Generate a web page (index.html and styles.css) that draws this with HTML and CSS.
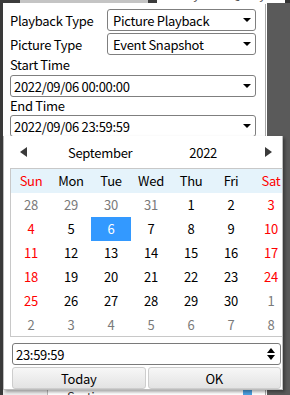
FILE: index.html
```html
<!DOCTYPE html>
<html lang="en">
<head>
    <meta charset="UTF-8">
    <title>Playback</title>
    <link rel="stylesheet" href="styles.css">
</head>
<body>
    <div class="screen">
        <div class="topbar">
            <div class="tb-left"></div>
            <div class="tb-tab"></div>
            <div class="tb-gap"></div>
            <div class="tb-active"><span class="tb-text">Playback Query</span></div>
            <div class="tb-right"></div>
        </div>

        <div class="workspace">
            <div class="edge"></div>
            <div class="panel">
                <div class="form">
                    <div class="row">
                        <span class="row-label">Playback Type</span>
                        <div class="select">
                            <span>Picture Playback</span>
                            <span class="caret"></span>
                        </div>
                    </div>
                    <div class="row">
                        <span class="row-label">Picture Type</span>
                        <div class="select">
                            <span>Event Snapshot</span>
                            <span class="caret"></span>
                        </div>
                    </div>
                    <div class="field-label">Start Time</div>
                    <div class="input">
                        <span>2022/09/06 00:00:00</span>
                        <span class="caret"></span>
                    </div>
                    <div class="field-label second">End Time</div>
                    <div class="input">
                        <span>2022/09/06 23:59:59</span>
                        <span class="caret"></span>
                    </div>

                    <div class="list-head">
                        <div class="cell-first"></div>
                        <div class="cell-name">Sorting</div>
                        <div class="cell-mark"></div>
                    </div>
                </div>
            </div>
            <div class="side"></div>
        </div>

        <div class="calendar">
            <div class="cal-head">
                <span class="nav prev"></span>
                <span class="month">September</span>
                <span class="year">2022</span>
                <span class="nav next"></span>
            </div>

            <div class="cal-grid">
                <div class="days">
                    <span class="dow red">Sun</span>
                    <span class="dow">Mon</span>
                    <span class="dow">Tue</span>
                    <span class="dow">Wed</span>
                    <span class="dow">Thu</span>
                    <span class="dow">Fri</span>
                    <span class="dow red">Sat</span>

                    <span class="day other">28</span>
                    <span class="day other">29</span>
                    <span class="day other">30</span>
                    <span class="day other">31</span>
                    <span class="day">1</span>
                    <span class="day">2</span>
                    <span class="day red">3</span>

                    <span class="day red">4</span>
                    <span class="day">5</span>
                    <span class="day selected">6</span>
                    <span class="day">7</span>
                    <span class="day">8</span>
                    <span class="day">9</span>
                    <span class="day red">10</span>

                    <span class="day red">11</span>
                    <span class="day">12</span>
                    <span class="day">13</span>
                    <span class="day">14</span>
                    <span class="day">15</span>
                    <span class="day">16</span>
                    <span class="day red">17</span>

                    <span class="day red">18</span>
                    <span class="day">19</span>
                    <span class="day">20</span>
                    <span class="day">21</span>
                    <span class="day">22</span>
                    <span class="day">23</span>
                    <span class="day red">24</span>

                    <span class="day red">25</span>
                    <span class="day">26</span>
                    <span class="day">27</span>
                    <span class="day">28</span>
                    <span class="day">29</span>
                    <span class="day">30</span>
                    <span class="day other">1</span>

                    <span class="day other">2</span>
                    <span class="day other">3</span>
                    <span class="day other">4</span>
                    <span class="day other">5</span>
                    <span class="day other">6</span>
                    <span class="day other">7</span>
                    <span class="day other">8</span>
                </div>
            </div>

            <div class="time-input">
                <span>23:59:59</span>
                <span class="spin">
                    <span class="spin-up"></span>
                    <span class="spin-down"></span>
                </span>
            </div>

            <div class="buttons">
                <button class="btn">Today</button>
                <button class="btn">OK</button>
            </div>
        </div>
    </div>
</body>
</html>
```

FILE: styles.css
```css
* {
    margin: 0;
    padding: 0;
    box-sizing: border-box;
}
body {
    font-family: 'Noto Sans CJK SC', 'Noto Sans', sans-serif;
    font-size: 13px;
    letter-spacing: -0.3px;
    color: #000;
    background: #5a5a5a;
}
.screen {
    position: relative;
    width: 290px;
    height: 395px;
    overflow: hidden;
    display: flex;
    flex-direction: column;
}

/* top strip */
.topbar {
    display: flex;
    height: 3px;
    flex: none;
    overflow: hidden;
}
.tb-left {
    width: 20px;
    background: #3c3c3c;
}
.tb-tab {
    width: 128px;
    background: #c4c4c4;
}
.tb-gap {
    width: 9px;
    background: #3c3c3c;
}
.tb-active {
    width: 128px;
    background: #fff;
    overflow: hidden;
}
.tb-text {
    display: block;
    margin: -14px 0 0 18px;
    line-height: 16px;
    color: #555;
}
.tb-right {
    flex: 1;
    background: #333;
}

/* main area */
.workspace {
    flex: 1;
    display: flex;
}
.edge {
    width: 3px;
    background: #3a3a3a;
}
.panel {
    width: 264px;
    background: #fff;
    padding: 1px 1px 0 0;
}
.form {
    height: 100%;
    border-right: 1px solid #a8a8a8;
    padding: 5px 0 0 7px;
    display: flex;
    flex-direction: column;
}
.side {
    flex: 1;
    background: #5a5a5a;
}

.row {
    display: flex;
    align-items: center;
    height: 22px;
    margin-bottom: 2px;
}
.row-label {
    width: 97px;
}
.select,
.input {
    display: flex;
    align-items: center;
    justify-content: space-between;
    height: 22px;
    border: 1px solid #7f7f7f;
    border-radius: 3px;
    padding: 0 4px 0 5px;
}
.select {
    width: 149px;
}
.input {
    width: 246px;
    padding-left: 3px;
}
.caret {
    width: 0;
    height: 0;
    border-left: 4px solid transparent;
    border-right: 4px solid transparent;
    border-top: 4px solid #000;
}
.field-label {
    height: 20px;
    line-height: 20px;
    margin-top: -2px;
}
.field-label.second {
    height: 18px;
    line-height: 18px;
    margin-top: 0;
}

.list-head {
    margin: auto 0 0 -7px;
    height: 6px;
    display: flex;
    overflow: hidden;
}
.cell-first {
    width: 45px;
    background: #eee;
    border-right: 1px solid #b8b8b8;
}
.cell-name {
    flex: 1;
    padding-left: 19px;
    line-height: 16px;
    color: #333;
}
.cell-mark {
    width: 9px;
    margin-right: 13px;
    background: #4a9fe0;
}

/* calendar popup */
.calendar {
    position: absolute;
    left: 3px;
    top: 136px;
    width: 280px;
    height: 254px;
    background: #fff;
    border: 1px solid #bdbdbd;
    border-top: none;
    box-shadow: 2px 2px 3px rgba(0, 0, 0, 0.35);
}
.cal-head {
    display: flex;
    align-items: center;
    height: 32px;
}
.nav {
    width: 0;
    height: 0;
    border-top: 5px solid transparent;
    border-bottom: 5px solid transparent;
}
.prev {
    margin-left: 16px;
    border-right: 7px solid #3a3a3a;
}
.next {
    margin: 0 10px 0 auto;
    border-left: 7px solid #3a3a3a;
}
.month {
    margin-left: 41px;
}
.year {
    margin-left: 57px;
}

.cal-grid {
    margin-left: 6px;
    height: 169px;
    border-top: 1px solid #c8c8c8;
    border-left: 1px solid #c8c8c8;
    border-bottom: 1px solid #c8c8c8;
    overflow: hidden;
}
.days {
    display: grid;
    grid-template-columns: repeat(7, 40px);
    grid-auto-rows: 24px;
}
.dow {
    background: #e5f3fb;
    text-align: center;
    line-height: 24px;
}
.day {
    text-align: center;
    line-height: 24px;
}
.red {
    color: #f00;
}
.other {
    color: #7a7a7a;
}
.selected {
    background: #3399ff;
    color: #fff;
}

.time-input {
    display: flex;
    align-items: center;
    justify-content: space-between;
    width: 269px;
    height: 22px;
    margin: 6px 0 0 8px;
    border: 1px solid #7a7a7a;
    border-radius: 3px;
    padding: 0 5px 0 3px;
}
.spin {
    display: flex;
    flex-direction: column;
    gap: 2px;
}
.spin-up,
.spin-down {
    width: 0;
    height: 0;
    border-left: 4px solid transparent;
    border-right: 4px solid transparent;
}
.spin-up {
    border-bottom: 5px solid #000;
}
.spin-down {
    border-top: 5px solid #000;
}

.buttons {
    display: flex;
    gap: 2px;
    margin: 2px 0 0 8px;
    width: 269px;
}
.btn {
    flex: 1;
    height: 22px;
    font-family: inherit;
    font-size: 13px;
    letter-spacing: inherit;
    color: #000;
    background: linear-gradient(#f7f7f7, #e3e3e3);
    border: 1px solid #cdcdcd;
    border-radius: 3px;
}
```
